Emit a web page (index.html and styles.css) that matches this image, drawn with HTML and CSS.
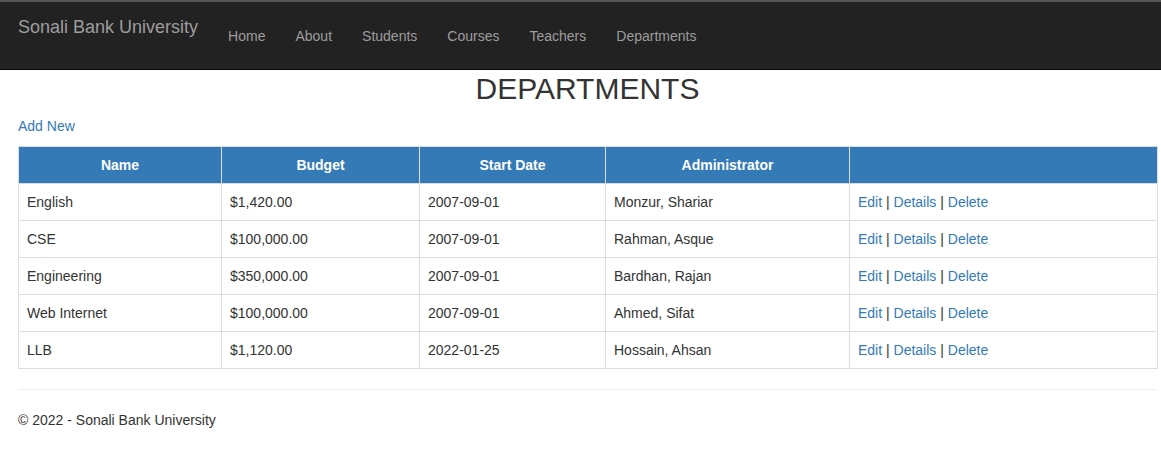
FILE: index.html
```html
<!DOCTYPE html>
<html>
<head>
<meta charset="utf-8">
<title>Departments</title>
<link rel="stylesheet" href="styles.css">
</head>
<body>
<header class="navbar">
  <a class="brand" href="#">Sonali Bank University</a>
  <ul class="nav">
    <li><a href="#">Home</a></li>
    <li><a href="#">About</a></li>
    <li><a href="#">Students</a></li>
    <li><a href="#">Courses</a></li>
    <li><a href="#">Teachers</a></li>
    <li><a href="#">Departments</a></li>
  </ul>
</header>
<main class="content">
  <h2 class="title">DEPARTMENTS</h2>
  <p class="actions"><a href="#">Add New</a></p>
  <table class="grid">
    <colgroup>
      <col class="c1"><col class="c2"><col class="c3"><col class="c4"><col class="c5">
    </colgroup>
    <thead>
      <tr><th>Name</th><th>Budget</th><th>Start Date</th><th>Administrator</th><th></th></tr>
    </thead>
    <tbody>
      <tr><td>English</td><td>$1,420.00</td><td>2007-09-01</td><td>Monzur, Shariar</td><td><a href="#">Edit</a> | <a href="#">Details</a> | <a href="#">Delete</a></td></tr>
      <tr><td>CSE</td><td>$100,000.00</td><td>2007-09-01</td><td>Rahman, Asque</td><td><a href="#">Edit</a> | <a href="#">Details</a> | <a href="#">Delete</a></td></tr>
      <tr><td>Engineering</td><td>$350,000.00</td><td>2007-09-01</td><td>Bardhan, Rajan</td><td><a href="#">Edit</a> | <a href="#">Details</a> | <a href="#">Delete</a></td></tr>
      <tr><td>Web Internet</td><td>$100,000.00</td><td>2007-09-01</td><td>Ahmed, Sifat</td><td><a href="#">Edit</a> | <a href="#">Details</a> | <a href="#">Delete</a></td></tr>
      <tr><td>LLB</td><td>$1,120.00</td><td>2022-01-25</td><td>Hossain, Ahsan</td><td><a href="#">Edit</a> | <a href="#">Details</a> | <a href="#">Delete</a></td></tr>
    </tbody>
  </table>
  <hr class="rule">
  <footer class="footer">&copy; 2022 - Sonali Bank University</footer>
</main>
</body>
</html>
```

FILE: styles.css
```css
* { box-sizing: border-box; }
html, body { margin: 0; padding: 0; }
body {
  font-family: "Liberation Sans", Arial, Helvetica, sans-serif;
  font-size: 14px;
  line-height: 20px;
  color: #333;
  background: #fff;
}
a { color: #337ab7; text-decoration: none; }

.navbar {
  display: flex;
  align-items: flex-start;
  height: 70px;
  background: #222;
  border-top: 2px solid #555;
  border-bottom: 1px solid #080808;
  padding-left: 3px;
}
.brand {
  display: block;
  padding: 15px;
  font-size: 18px;
  line-height: 20px;
  color: #9d9d9d;
}
.nav {
  display: flex;
  list-style: none;
  margin: 9px 0 0 0;
  padding: 0;
}
.nav a {
  display: block;
  padding: 15px;
  line-height: 20px;
  color: #9d9d9d;
}

.content {
  padding: 0 4px 0 18px;
}
.title {
  margin: 2px 0 11px 0;
  font-size: 30px;
  font-weight: 500;
  line-height: 33px;
  text-align: center;
  color: #333;
}
.actions { margin: 0 0 10px 0; }

.grid {
  width: 1140px;
  table-layout: fixed;
  border-collapse: collapse;
  border-spacing: 0;
  margin-bottom: 20px;
}
.c1 { width: 203px; }
.c2 { width: 198px; }
.c3 { width: 186px; }
.c4 { width: 244px; }
.c5 { width: 308px; }
.grid th, .grid td {
  border: 1px solid #ddd;
  padding: 8px;
  line-height: 20px;
  text-align: left;
  vertical-align: top;
}
.grid th {
  background: #337ab7;
  color: #fff;
  font-weight: bold;
  text-align: center;
}
.rule {
  margin: 20px 0;
  border: 0;
  border-top: 1px solid #eee;
}
.footer { line-height: 20px; }
```
